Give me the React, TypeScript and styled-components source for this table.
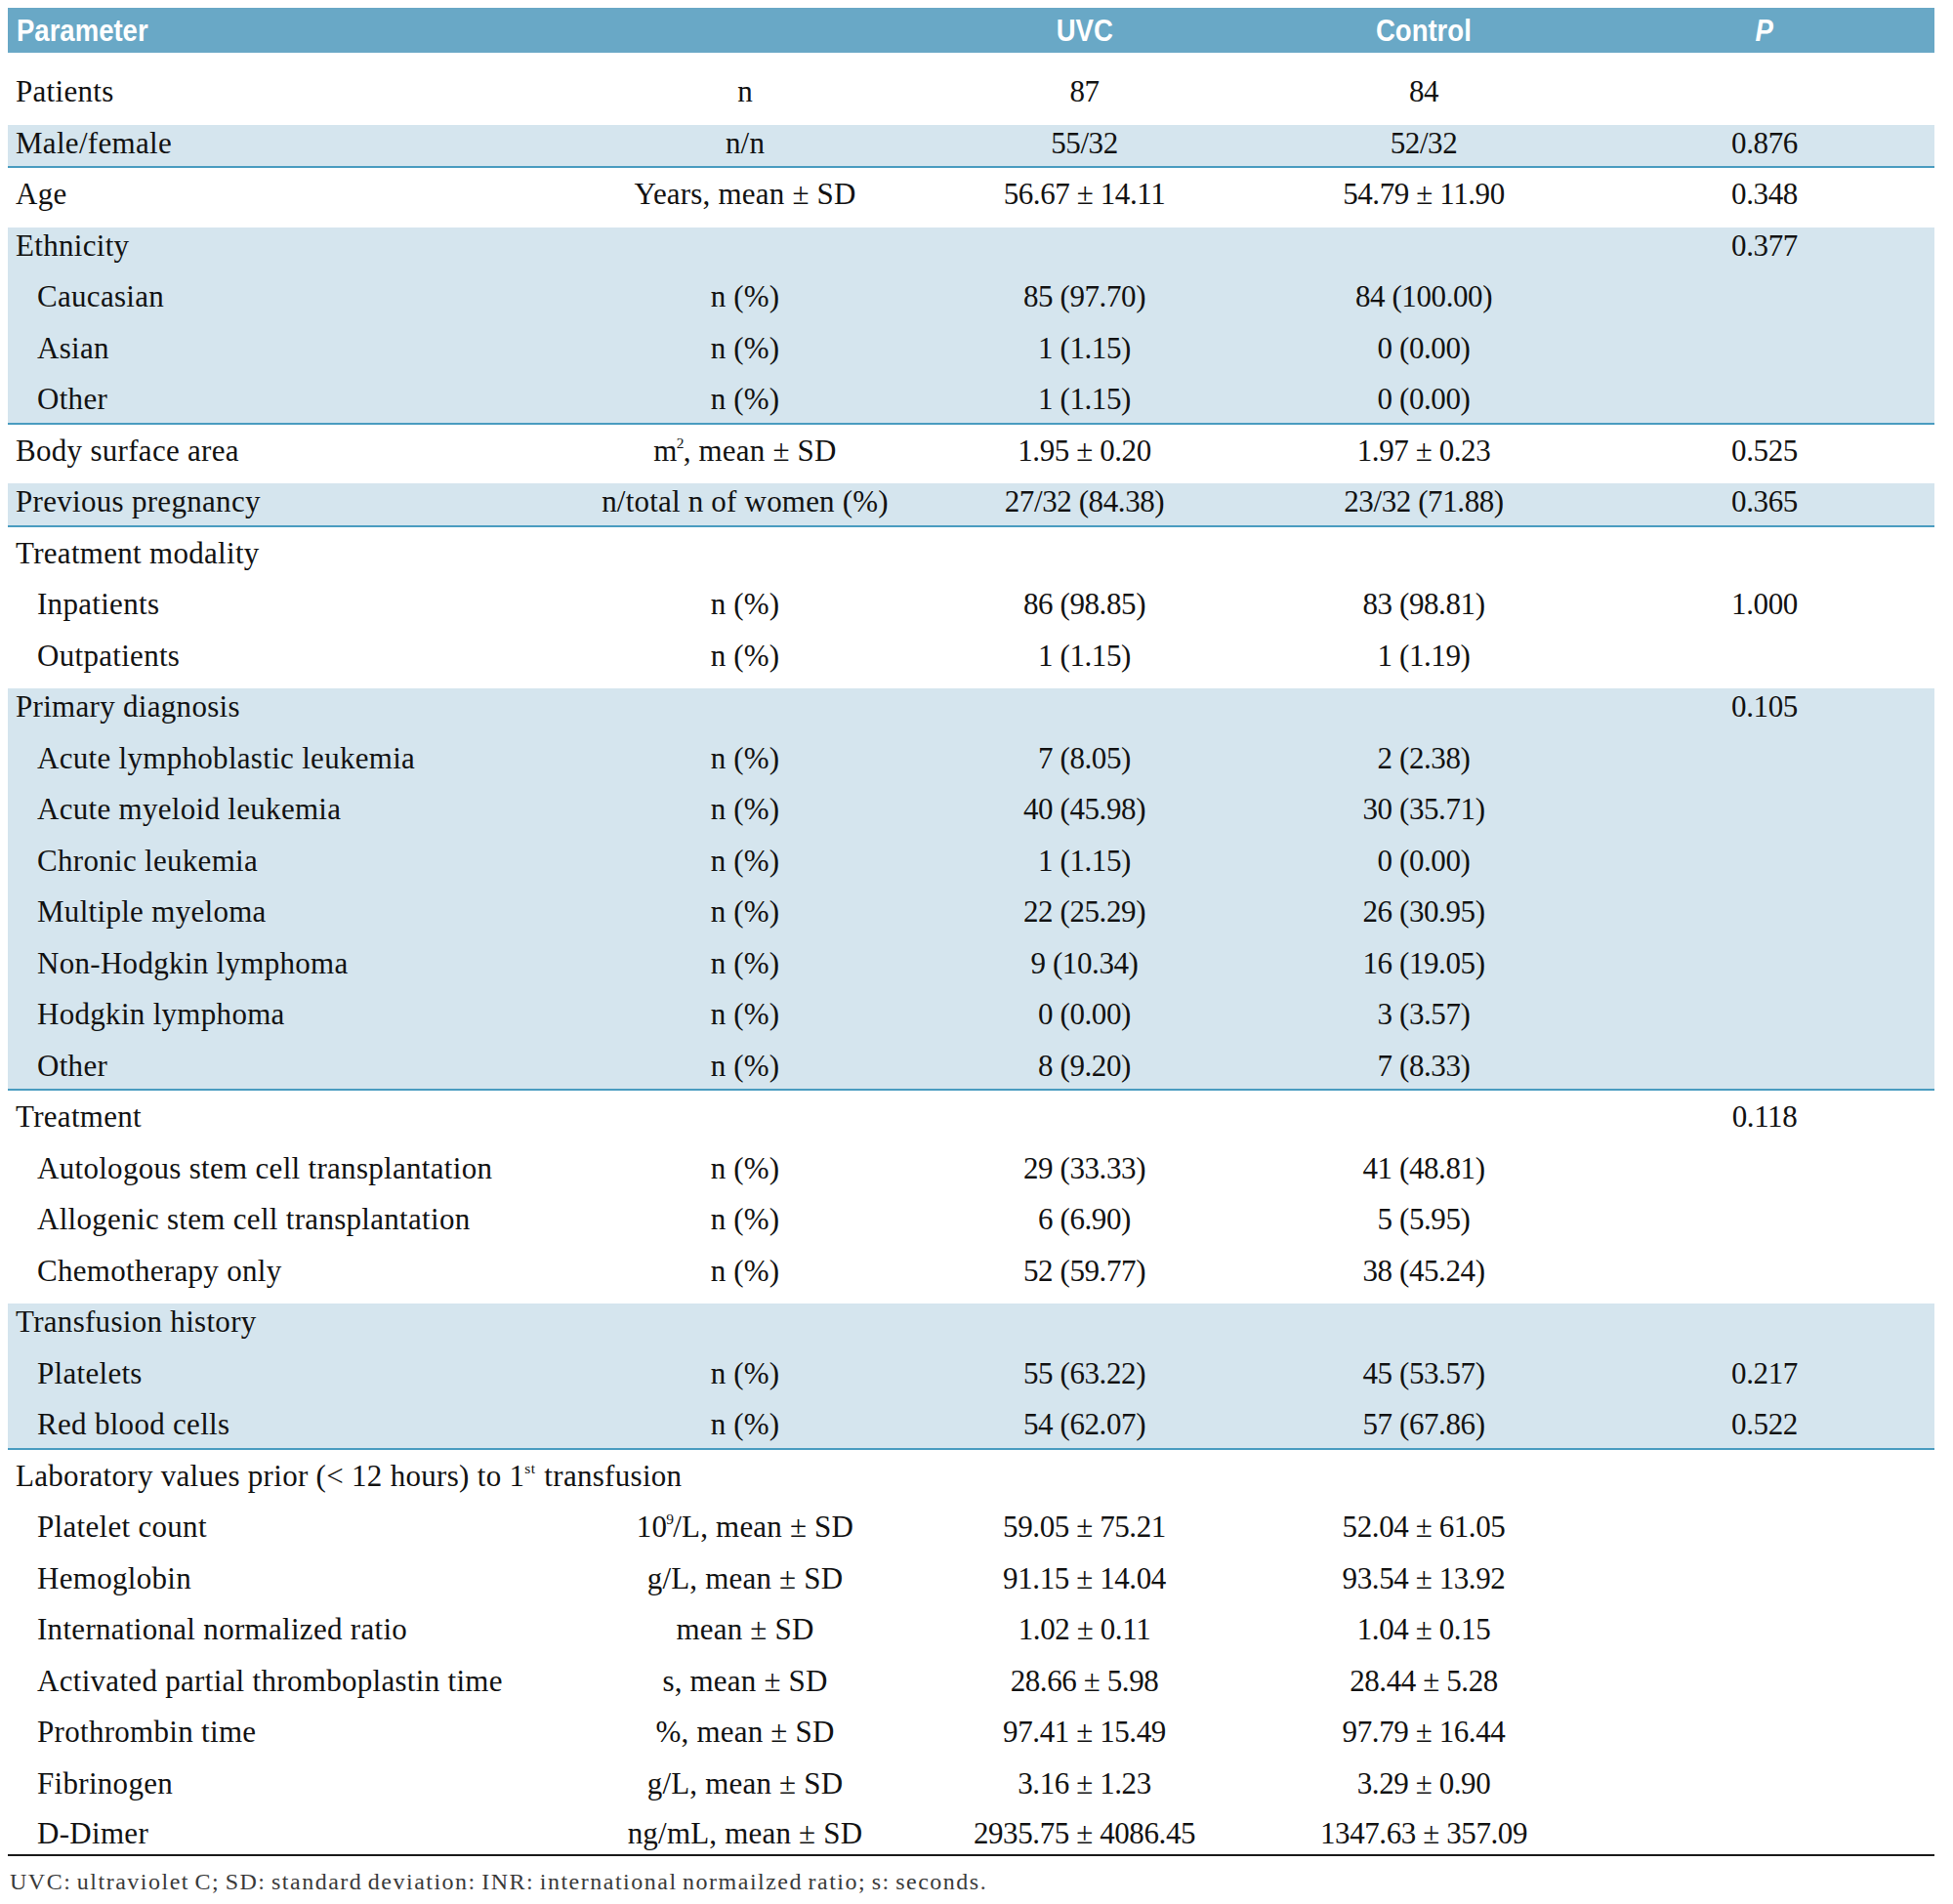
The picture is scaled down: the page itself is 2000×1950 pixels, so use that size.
import React from 'react';
import styled, { createGlobalStyle } from 'styled-components';

const GlobalStyle = createGlobalStyle`
  html, body {
    margin: 0;
    padding: 0;
    background: #ffffff;
  }
  body {
    font-family: "Liberation Serif", "Times New Roman", serif;
    color: #121212;
  }
`;

const columns = '580px 350px 345px 350px 348px';

const Page = styled.div`
  padding: 8px 0 0 8px;
  width: 1973px;
`;

const Table = styled.div`
  width: 1973px;
  border-bottom: 2px solid #1a1a1a;
`;

const HeadRow = styled.div`
  display: grid;
  grid-template-columns: ${columns};
  align-items: center;
  height: 46px;
  background: #69a8c6;
`;

const HeadCell = styled.div<{ $left?: boolean }>`
  text-align: ${p => (p.$left ? 'left' : 'center')};
  padding-left: ${p => (p.$left ? '9px' : '0')};
`;

// Condensed bold sans for the column titles.
const HeadText = styled.span<{ $italic?: boolean; $left?: boolean }>`
  display: inline-block;
  font-family: "Liberation Sans", Arial, sans-serif;
  font-weight: bold;
  font-size: 32px;
  line-height: 1;
  color: #ffffff;
  font-style: ${p => (p.$italic ? 'italic' : 'normal')};
  transform: scaleX(0.86);
  transform-origin: ${p => (p.$left ? 'left center' : 'center')};
`;

const Body = styled.div`
  padding-top: 13px;
`;

const Group = styled.div<{ $shaded: boolean }>`
  background: ${p => (p.$shaded ? 'linear-gradient(to bottom, transparent 8px, #d5e5ee 8px)' : 'transparent')};
  box-shadow: ${p => (p.$shaded ? 'inset 0 -2px 0 #4a9cc0' : 'none')};
`;

const Row = styled.div<{ $tight?: boolean }>`
  display: grid;
  grid-template-columns: ${columns};
  align-items: center;
  height: ${p => (p.$tight ? '47px' : '52.5px')};
  padding-top: ${p => (p.$tight ? '4px' : '1px')};
  box-sizing: border-box;
  font-size: 31px;
  line-height: 1;
  white-space: nowrap;
`;

const Cell = styled.div<{ $num?: boolean }>`
  text-align: center;
  letter-spacing: ${p => (p.$num ? '-0.4px' : '0.2px')};
`;

const Label = styled.div<{ $sub: boolean }>`
  text-align: left;
  letter-spacing: 0.3px;
  padding-left: ${p => (p.$sub ? '30px' : '8px')};
`;

const Sup = styled.sup<{ $tight?: boolean }>`
  font-size: 0.5em;
  vertical-align: 0.85em;
  line-height: 0;
  margin-left: ${p => (p.$tight ? '-1px' : '0')};
  margin-right: ${p => (p.$tight ? '-1px' : '1px')};
`;

const Footnote = styled.div`
  margin-top: 12px;
  padding-left: 2px;
  font-size: 24px;
  line-height: 28px;
  letter-spacing: 1.5px;
  word-spacing: -2px;
  color: #3a3a3a;
`;

interface IRow {
  label: React.ReactNode;
  sub?: boolean;
  unit?: React.ReactNode;
  uvc?: string;
  control?: string;
  p?: string;
}

interface IGroup {
  shaded?: boolean;
  rows: IRow[];
}

const nPct = 'n (%)';
const meanSd = (unit: string) => `${unit}mean ± SD`;

const groups: IGroup[] = [
  { rows: [{ label: 'Patients', unit: 'n', uvc: '87', control: '84' }] },
  { shaded: true, rows: [{ label: 'Male/female', unit: 'n/n', uvc: '55/32', control: '52/32', p: '0.876' }] },
  { rows: [{ label: 'Age', unit: 'Years, mean ± SD', uvc: '56.67 ± 14.11', control: '54.79 ± 11.90', p: '0.348' }] },
  {
    shaded: true,
    rows: [
      { label: 'Ethnicity', p: '0.377' },
      { label: 'Caucasian', sub: true, unit: nPct, uvc: '85 (97.70)', control: '84 (100.00)' },
      { label: 'Asian', sub: true, unit: nPct, uvc: '1 (1.15)', control: '0 (0.00)' },
      { label: 'Other', sub: true, unit: nPct, uvc: '1 (1.15)', control: '0 (0.00)' },
    ],
  },
  {
    rows: [
      { label: 'Body surface area', unit: <>m<Sup $tight>2</Sup>, mean ± SD</>, uvc: '1.95 ± 0.20', control: '1.97 ± 0.23', p: '0.525' },
    ],
  },
  {
    shaded: true,
    rows: [
      { label: 'Previous pregnancy', unit: 'n/total n of women (%)', uvc: '27/32 (84.38)', control: '23/32 (71.88)', p: '0.365' },
    ],
  },
  {
    rows: [
      { label: 'Treatment modality' },
      { label: 'Inpatients', sub: true, unit: nPct, uvc: '86 (98.85)', control: '83 (98.81)', p: '1.000' },
      { label: 'Outpatients', sub: true, unit: nPct, uvc: '1 (1.15)', control: '1 (1.19)' },
    ],
  },
  {
    shaded: true,
    rows: [
      { label: 'Primary diagnosis', p: '0.105' },
      { label: 'Acute lymphoblastic leukemia', sub: true, unit: nPct, uvc: '7 (8.05)', control: '2 (2.38)' },
      { label: 'Acute myeloid leukemia', sub: true, unit: nPct, uvc: '40 (45.98)', control: '30 (35.71)' },
      { label: 'Chronic leukemia', sub: true, unit: nPct, uvc: '1 (1.15)', control: '0 (0.00)' },
      { label: 'Multiple myeloma', sub: true, unit: nPct, uvc: '22 (25.29)', control: '26 (30.95)' },
      { label: 'Non-Hodgkin lymphoma', sub: true, unit: nPct, uvc: '9 (10.34)', control: '16 (19.05)' },
      { label: 'Hodgkin lymphoma', sub: true, unit: nPct, uvc: '0 (0.00)', control: '3 (3.57)' },
      { label: 'Other', sub: true, unit: nPct, uvc: '8 (9.20)', control: '7 (8.33)' },
    ],
  },
  {
    rows: [
      { label: 'Treatment', p: '0.118' },
      { label: 'Autologous stem cell transplantation', sub: true, unit: nPct, uvc: '29 (33.33)', control: '41 (48.81)' },
      { label: 'Allogenic stem cell transplantation', sub: true, unit: nPct, uvc: '6 (6.90)', control: '5 (5.95)' },
      { label: 'Chemotherapy only', sub: true, unit: nPct, uvc: '52 (59.77)', control: '38 (45.24)' },
    ],
  },
  {
    shaded: true,
    rows: [
      { label: 'Transfusion history' },
      { label: 'Platelets', sub: true, unit: nPct, uvc: '55 (63.22)', control: '45 (53.57)', p: '0.217' },
      { label: 'Red blood cells', sub: true, unit: nPct, uvc: '54 (62.07)', control: '57 (67.86)', p: '0.522' },
    ],
  },
  {
    rows: [
      { label: <>Laboratory values prior (&lt; 12 hours) to 1<Sup>st</Sup> transfusion</> },
      { label: 'Platelet count', sub: true, unit: <>10<Sup $tight>9</Sup>/L, mean ± SD</>, uvc: '59.05 ± 75.21', control: '52.04 ± 61.05' },
      { label: 'Hemoglobin', sub: true, unit: meanSd('g/L, '), uvc: '91.15 ± 14.04', control: '93.54 ± 13.92' },
      { label: 'International normalized ratio', sub: true, unit: meanSd(''), uvc: '1.02 ± 0.11', control: '1.04 ± 0.15' },
      { label: 'Activated partial thromboplastin time', sub: true, unit: meanSd('s, '), uvc: '28.66 ± 5.98', control: '28.44 ± 5.28' },
      { label: 'Prothrombin time', sub: true, unit: meanSd('%, '), uvc: '97.41 ± 15.49', control: '97.79 ± 16.44' },
      { label: 'Fibrinogen', sub: true, unit: meanSd('g/L, '), uvc: '3.16 ± 1.23', control: '3.29 ± 0.90' },
      { label: 'D-Dimer', sub: true, unit: meanSd('ng/mL, '), uvc: '2935.75 ± 4086.45', control: '1347.63 ± 357.09' },
    ],
  },
];

export default function App() {
  const lastGroup = groups.length - 1;
  return (
    <Page>
      <GlobalStyle />
      <Table>
        <HeadRow>
          <HeadCell $left><HeadText $left>Parameter</HeadText></HeadCell>
          <HeadCell />
          <HeadCell><HeadText>UVC</HeadText></HeadCell>
          <HeadCell><HeadText>Control</HeadText></HeadCell>
          <HeadCell><HeadText $italic>P</HeadText></HeadCell>
        </HeadRow>
        <Body>
          {groups.map((g, gi) => (
            <Group key={gi} $shaded={!!g.shaded}>
              {g.rows.map((r, ri) => (
                <Row key={ri} $tight={gi === lastGroup && ri === g.rows.length - 1}>
                  <Label $sub={!!r.sub}>{r.label}</Label>
                  <Cell>{r.unit}</Cell>
                  <Cell $num>{r.uvc}</Cell>
                  <Cell $num>{r.control}</Cell>
                  <Cell $num>{r.p}</Cell>
                </Row>
              ))}
            </Group>
          ))}
        </Body>
      </Table>
      <Footnote>
        UVC: ultraviolet C; SD: standard deviation: INR: international normailzed ratio; s: seconds.
      </Footnote>
    </Page>
  );
}
